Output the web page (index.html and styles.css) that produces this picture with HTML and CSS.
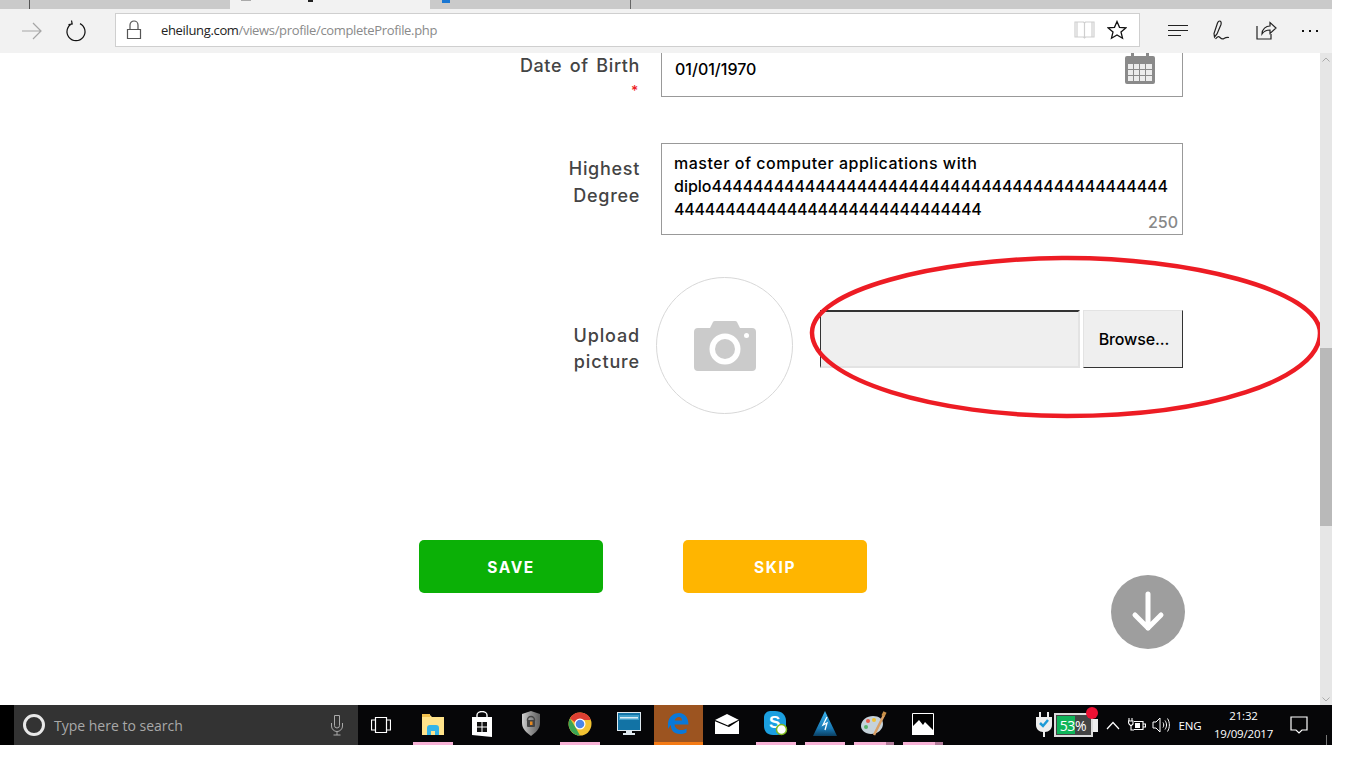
FILE: index.html
```html
<!DOCTYPE html>
<html lang="en">
<head>
<meta charset="utf-8">
<title>Complete Profile</title>
<link rel="stylesheet" href="styles.css">
</head>
<body>
<div class="screen">
  <div class="tabstrip">
    <div class="tab tab-first"></div>
    <div class="tab tab-active"><span class="tab-bit tab-bit-a"></span><span class="tab-bit tab-bit-b"></span></div>
    <div class="tab tab-second"><span class="tab-bit tab-bit-c"></span></div>
  </div>
  <div class="toolbar">
    <div class="nav">
      <svg class="ic" width="24" height="24" viewBox="0 0 24 24"><path d="M2 12H21M13 4l8 8-8 8" fill="none" stroke="#a6a6a6" stroke-width="1.2"/></svg>
      <svg class="ic" width="24" height="24" viewBox="0 0 24 24"><path d="M8 4.6A9 9 0 1 0 16 4.6M7.5 1.5L8.2 5 4.5 5.6" fill="none" stroke="#111" stroke-width="1.2"/></svg>
    </div>
    <div class="address">
      <svg class="lock" width="16" height="20" viewBox="0 0 16 20"><path d="M4 9V5a4 4 0 0 1 8 0v4M1.5 9.5h13v9h-13z" fill="none" stroke="#555" stroke-width="1.2"/></svg>
      <span class="url"><span class="host">eheilung.com</span>/views/profile/completeProfile.php</span>
      <svg class="book" width="21" height="18" viewBox="0 0 21 18"><path d="M1 1h8.500l1 1 1-1H20v15h-8.500l-1 1-1-1H1zM10.500 2v14M3 1v15M18 1v15" fill="none" stroke="#cfcfcf" stroke-width="1.2"/></svg>
      <svg class="star" width="20" height="20" viewBox="0 0 20 20"><path d="M10 1.500l2.500 5.800 6.300.6-4.800 4.100 1.500 6.200L10 14.900l-5.500 3.300L6 12 1.200 7.900l6.300-.6z" fill="none" stroke="#111" stroke-width="1.300"/></svg>
    </div>
    <div class="tools">
      <svg width="22" height="16" viewBox="0 0 22 16"><path d="M1 2.500h20M1 7.500h20M1 12.500h13" stroke="#222" stroke-width="1.200" fill="none"/></svg>
      <svg width="20" height="22" viewBox="0 0 20 22"><path d="M7.500 1C9 1 9.500 2.500 9 4.500L5 14l-2.500 3L2 13.500 5.500 3C6 1.800 6.700 1 7.500 1zM3.500 19c2-2.500 3-3 4.500-1.500s2.500 2 4 1 3-1.500 5-1" fill="none" stroke="#222" stroke-width="1.200"/></svg>
      <svg width="22" height="20" viewBox="0 0 22 20"><path d="M2 5v13h14v-5M7 13c0-5 4-8 8-8V1.500l6 5.500-6 5.500V9c-4 0-6 1-8 4z" fill="none" stroke="#222" stroke-width="1.200"/></svg>
      <svg width="20" height="6" viewBox="0 0 20 6"><path d="M2 3h2M9 3h2M16 3h2" stroke="#111" stroke-width="1.800"/></svg>
    </div>
  </div>
  <div class="viewport">
    <main class="page">
      <div class="row row-date">
        <div class="label label-date">Date of Birth<span class="req">*</span></div>
        <div class="field field-date">
          <span>01/01/1970</span>
          <svg class="cal" width="30" height="31" viewBox="0 0 30 31"><path fill="#8a8a8a" d="M2 3h4V0h3v3h12V0h3v3h4a2 2 0 0 1 2 2v24a2 2 0 0 1-2 2H2a2 2 0 0 1-2-2V5a2 2 0 0 1 2-2z"/><path fill="#ececec" d="M3 11h5v5H3zM9 11h5v5H9zM15 11h5v5h-5zM21 11h6v5h-6zM3 17h5v5H3zM9 17h5v5H9zM15 17h5v5h-5zM21 17h6v5h-6zM3 23h5v5H3zM9 23h5v5H9zM15 23h5v5h-5zM21 23h6v5h-6z"/></svg>
        </div>
      </div>
      <div class="row row-degree">
        <div class="label">Highest<br>Degree</div>
        <div class="field field-text">
          <div class="ta"><span class="ta-words">master of computer applications with</span><br>diplo<span class="ta-digits">44444444444444444444444444444444444444444444</span><br><span class="ta-digits ta-last">444444444444444444444444444444</span></div>
          <span class="count">250</span>
        </div>
      </div>
      <div class="row row-upload">
        <div class="label">Upload<br>picture</div>
        <div class="avatar">
          <svg width="62" height="50" viewBox="0 0 62 50"><path fill="#cbcbcb" d="M4 7h12l3-6q.5-1 2-1h20q1.500 0 2 1l3 6h12a4 4 0 0 1 4 4v35a4 4 0 0 1-4 4H4a4 4 0 0 1-4-4V11a4 4 0 0 1 4-4z"/><circle cx="31" cy="28" r="15.500" fill="#fff"/><circle cx="31" cy="28" r="10" fill="#cbcbcb"/><circle cx="52.500" cy="14.500" r="2.500" fill="#fff"/></svg>
        </div>
        <div class="file">
          <div class="file-name"></div>
          <div class="file-btn">Browse...</div>
        </div>
      </div>
      <div class="actions">
        <div class="btn btn-save">SAVE</div>
        <div class="btn btn-skip">SKIP</div>
      </div>
      <div class="down">
        <svg width="34" height="42" viewBox="0 0 34 42"><path d="M17 3v34M4 24l13 13 13-13" fill="none" stroke="#fff" stroke-width="5" stroke-linecap="round" stroke-linejoin="round"/></svg>
      </div>
      <svg class="ellipse" width="516" height="164" viewBox="0 0 516 164"><path d="M253 3C378 2 511 35 511 78C511 125 398 161 258 161C128 161 4 125 3 78C2 35 128 4 253 3Z" fill="none" stroke="#ed1c24" stroke-width="4.5"/></svg>
    </main>
    <div class="scrollbar">
      <div class="sb-arrow sb-up"><svg width="8" height="5" viewBox="0 0 8 5"><path d="M.5 4.500L4 1l3.500 3.500" fill="none" stroke="#aaa"/></svg></div>
      <div class="sb-track"><div class="sb-thumb"></div></div>
      <div class="sb-arrow"><svg width="8" height="5" viewBox="0 0 8 5"><path d="M.5.5L4 4 7.500.5" fill="none" stroke="#aaa"/></svg></div>
    </div>
  </div>
  <div class="taskbar">
    <div class="tb-start"></div>
    <div class="search">
      <span class="cortana"></span>
      <span class="search-text">Type here to search</span>
      <svg width="14" height="22" viewBox="0 0 14 22"><path d="M4.500 1.500h5v10a2.500 2.500 0 0 1-5 0zM1.500 9v3a5.500 5.500 0 0 0 11 0V9M7 17.500V21M3.500 21h7" fill="none" stroke="#aaa" stroke-width="1"/></svg>
    </div>
    <div class="taskview">
      <svg width="20" height="18" viewBox="0 0 20 18"><path d="M4.500 1.500h11v15h-11zM4 4H.5v10H4M16 4h3.500v10H16" fill="none" stroke="#fff" stroke-width="1.200"/></svg>
    </div>
    <div class="cell run">
      <svg width="22" height="22" viewBox="0 0 22 22"><path fill="#ffe38a" d="M0 2h8l2 2h12v18H0z"/><path fill="#f2c14e" d="M0 1h8v3H0z"/><path fill="#33b4e8" d="M5 15q0-3 3-3h6q3 0 3 3v7h-4v-4H9v4H5z"/></svg>
    </div>
    <div class="cell">
      <svg width="22" height="26" viewBox="0 0 22 26"><path fill="#fff" d="M1 6h20v20L1 24z"/><path fill="none" stroke="#fff" stroke-width="1.400" d="M6 6V4a5 3.500 0 0 1 10 0v2"/><path fill="#111" d="M6 11h4.500v4.500H6zM11.500 11H16v4.500h-4.500zM6 16.500h4.500V21H6zM11.500 16.500H16V21h-4.500z"/></svg>
    </div>
    <div class="cell">
      <svg width="20" height="25" viewBox="0 0 20 25"><defs><linearGradient id="sh" x1="0" y1="0" x2="1" y2="0"><stop offset="0" stop-color="#d0d0d0"/><stop offset=".5" stop-color="#8f8f8f"/><stop offset="1" stop-color="#5f5f5f"/></linearGradient></defs><path fill="url(#sh)" d="M10 0l9 3v9c0 6-5 10-9 13-4-3-9-7-9-13V3z"/><circle cx="10" cy="9" r="3.500" fill="none" stroke="#444" stroke-width="1.500"/><rect x="6" y="9" width="8" height="7" rx="1" fill="#444"/><rect x="9" y="10.500" width="2.500" height="3.500" fill="#e98a1f"/></svg>
    </div>
    <div class="cell run">
      <svg width="24" height="24" viewBox="0 0 24 24"><circle cx="12" cy="12" r="11.500" fill="#f1c232"/><path fill="#dd3f32" d="M2 6.500A11.500 11.500 0 0 1 22.800 8H12a4.500 4.500 0 0 0-4.300 3z"/><path fill="#3aa655" d="M2 6.500L7.600 15.500 12 23.500A11.500 11.500 0 0 1 2 6.500z"/><circle cx="12" cy="12" r="5.500" fill="#fff"/><circle cx="12" cy="12" r="4.300" fill="#4a86e8"/></svg>
    </div>
    <div class="cell">
      <svg width="24" height="24" viewBox="0 0 24 24"><path fill="#dfe9ef" d="M0 0h24v19H0zM9 19h6v2h3v2H6v-2h3z"/><rect x="1" y="1" width="22" height="17" fill="#1273a5"/><rect x="2" y="3" width="20" height="5" fill="#3f9fca"/><rect x="3" y="5" width="18" height="1.500" fill="#d9edf5"/></svg>
    </div>
    <div class="cell cell-edge">
      <svg width="22" height="23" viewBox="0 0 22 23"><path fill="#0a78d7" fill-rule="evenodd" d="M1 11C2 4 7 1 12 1c6 0 9.500 5 9.500 11.500H7.500C8 16.500 11 18 14 18c2 0 4-.5 5.500-1.500v4c-2.500 1.300-4.500 1.500-6.500 1.500-6 0-9.500-4-9-9-1 1-2 2-3 4zM7.700 8.500H15C15 6 13.500 5 11.800 5 10 5 8.200 6.300 7.700 8.500z"/></svg>
    </div>
    <div class="cell">
      <svg width="24" height="20" viewBox="0 0 24 20"><path fill="#fff" d="M0 6L12 0l12 6v14H0z"/><path fill="none" stroke="#000" stroke-width="1.200" d="M0 6.500l14 6"/><path fill="#000" d="M24 5.500L13 11l1 2 10-6.500z"/></svg>
    </div>
    <div class="cell run">
      <svg width="24" height="25" viewBox="0 0 24 25"><path fill="#1b9fe0" d="M6 0h5c7 0 11 4 11 10v6c0 5-4 8-9 8H9c-6 0-9-4-9-9V6c0-3 3-6 6-6z"/><text x="5" y="17" class="skype-s">S</text><circle cx="17.500" cy="18.500" r="5" fill="#fff" stroke="#7cb81c" stroke-width="1.500"/></svg>
    </div>
    <div class="cell run">
      <svg width="24" height="25" viewBox="0 0 24 25"><defs><linearGradient id="lg" x1="0" y1="0" x2="0" y2="1"><stop offset="0" stop-color="#3bb4ee"/><stop offset=".7" stop-color="#1878b4"/><stop offset="1" stop-color="#0b3f62"/></linearGradient></defs><path fill="url(#lg)" d="M12 0l12 25H0z"/><path fill="none" stroke="#fff" stroke-width="1.300" d="M14 6l-4 8 4-2-2 7"/></svg>
    </div>
    <div class="cell run run-split">
      <svg width="26" height="26" viewBox="0 0 26 26"><path fill="#c5d2da" d="M12 5c6 0 10 3 10 8s-5 10-12 10C4 23 0 19 0 15 0 9 6 5 12 5z"/><circle cx="7" cy="10" r="2" fill="#e85c4a"/><circle cx="13" cy="9" r="2" fill="#f1c232"/><circle cx="5" cy="16" r="2" fill="#58b368"/><path stroke="#d9a066" stroke-width="2.500" d="M13 24L23 4"/><path stroke="#c99048" stroke-width="3.500" d="M22 5l2-4"/></svg>
    </div>
    <div class="cell run run-split">
      <svg width="22" height="22" viewBox="0 0 22 22"><path fill="#000" stroke="#fff" stroke-width="1" d="M.5.500h21v21H.5z"/><path fill="#fff" d="M0 22V14L7 7l4 5 2-3 9 9v4z"/></svg>
    </div>
    <div class="tray">
      <svg class="t-plug" width="16" height="26" viewBox="0 0 16 26"><path fill="#eee" d="M3 0h2v5h6V0h2v5h3v8c0 4-3 7-7 7v5H7v-5c-4 0-7-3-7-7V5h3z"/><path fill="none" stroke="#1e9bd7" stroke-width="2.500" d="M4 11l3 3 5-6"/></svg>
      <div class="battery">
        <div class="bat-body"><span class="bat-fill"></span><span class="bat-text">53%</span></div>
        <span class="bat-cap"></span>
        <span class="bat-dot"></span>
      </div>
      <svg class="t-up" width="14" height="9" viewBox="0 0 14 9"><path d="M1 8l6-6.500L13 8" fill="none" stroke="#fff" stroke-width="1.200"/></svg>
      <svg class="t-pow" width="18" height="14" viewBox="0 0 18 14"><path d="M6 3.500h9v8H6M15 6h2.500v3H15M4 0v3M1 0v3M0 3h5v3l-2 2-2-2zM3 8v4h3" fill="none" stroke="#fff" stroke-width="1.100"/><rect x="7" y="5" width="5" height="5" fill="#fff"/></svg>
      <svg class="t-vol" width="18" height="16" viewBox="0 0 18 16"><path d="M1 5h3l4-4v14l-4-4H1zM11 5.500c1 1.500 1 3.500 0 5M13 3.500c2 3 2 6 0 9M15.500 1.500c2.500 4 2.500 9 0 13" fill="none" stroke="#fff" stroke-width="1"/></svg>
      <span class="t-eng">ENG</span>
      <div class="t-clock"><span>21:32</span><span>19/09/2017</span></div>
      <svg class="t-note" width="18" height="18" viewBox="0 0 18 18"><path d="M1 1h16v13h-5l-3 3-3-3H1z" fill="none" stroke="#fff" stroke-width="1.200"/></svg>
    </div>
  </div>
</div>
</body>
</html>
```

FILE: styles.css
```css
* { box-sizing: border-box; }
html, body { margin: 0; padding: 0; background: #fff; overflow: hidden; }
body { width: 1366px; height: 768px; font-family: Inter, "Open Sans", "Liberation Sans", sans-serif; }
.screen { width: 1332px; height: 745px; display: flex; flex-direction: column; overflow: hidden; }

.tabstrip { height: 9px; background: #cacaca; display: flex; flex: none; }
.tab { height: 9px; position: relative; }
.tab-first { width: 230px; background: linear-gradient(#555,#555) 29px 0/1px 9px no-repeat; }
.tab-active { width: 200px; background: #f2f2f2; }
.tab-second { width: 201px; border-right: 1px solid #666; }
.tab-bit { position: absolute; bottom: 8px; height: 1px; background: #666; }
.tab-bit-a { left: 11px; width: 10px; background: #aaa; }
.tab-bit-b { left: 78px; width: 5px; height: 2px; bottom: 7px; background: #222; }
.tab-bit-c { left: 12px; width: 8px; height: 3px; bottom: 6px; background: #1976d2; }

.toolbar { height: 44px; background: #f2f2f2; display: flex; align-items: center; flex: none; padding-left: 20px; }
.nav { display: flex; gap: 20px; width: 95px; align-items: center; }
.address { width: 1025px; height: 34px; margin-top: -3px; background: #fff; border: 1px solid #cfcfcf; display: flex; align-items: center; padding-left: 10px; }
.lock { flex: none; margin-right: 19px; }
.url { font: 13px/1 "Open Sans", "Liberation Sans", sans-serif; color: #8a8a8a; letter-spacing: -.34px; flex: 1; padding-top: 2px; }
.host { color: #222; }
.book { margin-right: 12px; }
.star { margin-right: 12px; }
.tools { display: flex; align-items: center; gap: 23px; padding-left: 27px; }

.viewport { flex: none; height: 652px; display: flex; }
.page { width: 1320px; height: 652px; position: relative; overflow: hidden; background: #fff; display: flex; flex-direction: column; }

.row { display: flex; align-items: flex-start; flex: none; }
.label { width: 640px; text-align: right; font-size: 18px; font-weight: 500; line-height: 27px; color: #444; letter-spacing: .7px; flex: none; }
.label-date { word-spacing: 2.200px; letter-spacing: .62px; margin-top: -1px; }
.req { display: block; color: #ed1c24; font-size: 14px; line-height: 20px; margin-top: 2px; padding-right: 1px; }
.field { margin-left: 21px; width: 522px; border: 1px solid #999; background: #fff; color: #000; font-size: 16px; font-weight: 500; }

.row-date { height: 44px; }
.field-date { height: 44px; border-top: 0; display: flex; justify-content: space-between; padding: 6px 27px 0 13px; line-height: 20px; position: relative; }
.cal { margin-top: -6px; }

.row-degree { margin-top: 46px; height: 92px; }
.row-degree .label { padding-top: 12px; }
.field-text { height: 92px; position: relative; padding: 8px 12px; line-height: 23px; }
.ta { white-space: nowrap; }
.ta-words { letter-spacing: .53px; }
.ta-digits { letter-spacing: -.13px; }
.ta-last { letter-spacing: -.25px; }
.count { position: absolute; right: 4px; bottom: 2px; line-height: 20px; color: #888; font-weight: 500; }

.row-upload { margin-top: 42px; height: 137px; }
.row-upload .label { padding-top: 46px; line-height: 26px; letter-spacing: .85px; }
.avatar { margin-left: 16px; width: 137px; height: 137px; border: 1px solid #d8d8d8; border-radius: 50%; display: flex; align-items: center; justify-content: center; flex: none; }
.file { display: flex; margin-left: 27px; margin-top: 33px; gap: 3px; }
.file-name { width: 260px; height: 58px; background: #efefef; border-top: 2px solid #333; border-left: 1px solid #333; border-right: 2px solid #e3e3e3; border-bottom: 2px solid #e3e3e3; }
.file-btn { width: 100px; height: 58px; background: #efefef; border: 1px solid #e3e3e3; border-right-color: #333; border-bottom-color: #333; font-size: 16px; font-weight: 500; color: #000; letter-spacing: -.1px; padding-left: 2px; display: flex; align-items: center; justify-content: center; }

.actions { display: flex; margin-top: 126px; padding-left: 419px; gap: 80px; }
.btn { width: 184px; height: 53px; padding-top: 1px; border-radius: 5px; color: #fff; font-size: 15.500px; font-weight: 700; letter-spacing: 1.600px; display: flex; align-items: center; justify-content: center; }
.btn-save { background: #0bb006; }
.btn-skip { background: #ffb500; }

.down { position: absolute; left: 1111px; top: 522px; width: 74px; height: 74px; border-radius: 50%; background: #9e9e9e; display: flex; align-items: center; justify-content: center; }
.ellipse { position: absolute; left: 809px; top: 202px; }

.scrollbar { width: 12px; height: 652px; background: #e6e6e6; display: flex; flex-direction: column; }
.sb-arrow { height: 12px; display: flex; align-items: center; justify-content: center; flex: none; }
.sb-track { flex: 1; padding-top: 283px; }
.sb-thumb { height: 178px; background: #b9b9b9; }

.taskbar { height: 40px; flex: none; background: #060608; display: flex; align-items: stretch; color: #fff; font-family: "Open Sans", "Liberation Sans", sans-serif; }
.tb-start { width: 14px; background: #000; flex: none; }
.search { width: 344px; flex: none; background: #333; display: flex; align-items: center; padding-left: 9px; padding-right: 14px; }
.cortana { width: 22px; height: 22px; border-radius: 50%; border: 3px solid #e8e8e8; flex: none; margin-right: 9px; }
.search-text { flex: 1; font-size: 14px; color: #a8a8a8; }
.taskview { width: 50.500px; flex: none; display: flex; align-items: center; justify-content: center; padding-right: 4px; }
.cell { width: 49px; flex: none; display: flex; align-items: center; justify-content: center; position: relative; padding-bottom: 3px; }
.run::after { content: ""; position: absolute; left: 4.500px; right: 4.500px; bottom: 0; height: 3px; background: #f7b2d6; }
.run-split::after { background: linear-gradient(to right, #f7b2d6 80%, #b07a98 80%); }
.cell-edge { background: #9c5420; border-bottom: 3px solid #f47a14; padding-bottom: 0; }
.skype-s { font: 700 17px "Liberation Sans", sans-serif; fill: #fff; }

.tray { flex: 1; display: flex; align-items: center; position: relative; font-size: 12px; }
.tray::after { content: ""; position: absolute; right: 5px; bottom: 0; width: 1px; height: 10px; background: #777; }
.t-plug { margin-left: 88px; flex: none; }
.battery { margin-left: 2px; display: flex; align-items: center; position: relative; flex: none; }
.bat-body { width: 39px; height: 24px; border: 2px solid #ddd; background: #444; position: relative; display: flex; align-items: center; justify-content: center; }
.bat-fill { position: absolute; left: 1px; top: 1px; bottom: 1px; width: 53%; background: #10b55a; }
.bat-text { position: relative; font-size: 14px; color: #fff; letter-spacing: -.3px; }
.bat-cap { width: 5px; height: 13px; background: #eee; flex: none; }
.bat-dot { position: absolute; right: 0; top: -6px; width: 12px; height: 12px; border-radius: 50%; background: #ee1133; }
.t-up { margin-left: 8px; flex: none; }
.t-pow { margin-left: 8px; flex: none; }
.t-vol { margin-left: 6px; flex: none; }
.t-eng { margin-left: 9px; width: 34px; font-size: 11.500px; letter-spacing: -.2px; flex: none; }
.t-clock { width: 62px; display: flex; flex-direction: column; align-items: center; font-size: 11.500px; letter-spacing: -.2px; line-height: 18px; flex: none; }
.t-note { margin-left: 15px; flex: none; }
```
